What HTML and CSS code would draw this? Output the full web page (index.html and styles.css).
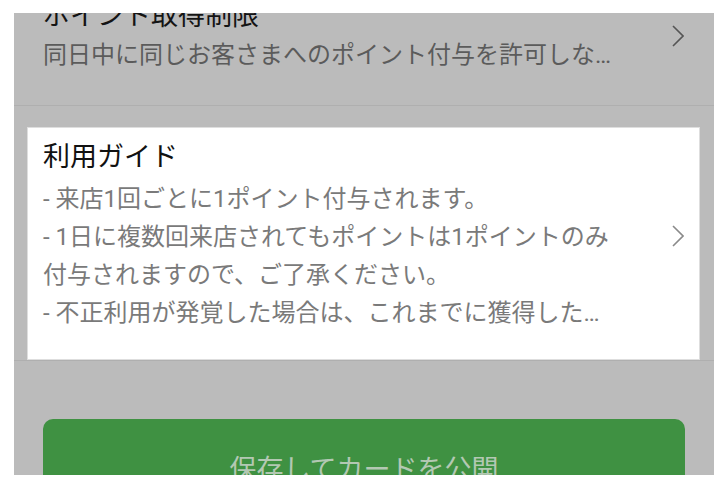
FILE: index.html
```html
<!DOCTYPE html>
<html lang="ja">
<head>
<meta charset="utf-8">
<link rel="stylesheet" href="styles.css">
</head>
<body>
<div class="screen">
  <div class="list">
    <div class="row row-dim">
      <div class="row-text">
        <div class="row-title">ポイント取得制限</div>
        <div class="row-sub">同日中に同じお客さまへのポイント付与を許可しな…</div>
      </div>
      <svg class="chev chev-dim" viewBox="0 0 12 22" width="12" height="22"><polyline points="1,1 11,11 1,21" fill="none" stroke="currentColor" stroke-width="1.6"/></svg>
    </div>
    <div class="row row-spot">
      <div class="card">
        <div class="row-text">
          <div class="card-title">利用ガイド</div>
          <div class="card-body">- 来店1回ごとに1ポイント付与されます。<br>- 1日に複数回来店されてもポイントは1ポイントのみ<br>付与されますので、ご了承ください。<br>- 不正利用が発覚した場合は、これまでに獲得した…</div>
        </div>
        <svg class="chev chev-card" viewBox="0 0 12 22" width="12" height="22"><polyline points="1,1 11,11 1,21" fill="none" stroke="currentColor" stroke-width="1.6"/></svg>
      </div>
    </div>
    <div class="actions">
      <div class="btn">保存してカードを公開</div>
    </div>
  </div>
</div>
</body>
</html>
```

FILE: styles.css
```css
html, body {
  margin: 0;
  padding: 0;
  background: #ffffff;
}
body {
  padding: 13px 14px 0 14px;
  font-family: Roboto, "Noto Sans CJK JP", sans-serif;
}
.screen {
  width: 700px;
  height: 462px;
  overflow: hidden;
  background: #bbbbbb;
}
.list {
  margin-top: -15px;
}
.row {
  display: flex;
  align-items: center;
  border-bottom: 1px solid #afafaf;
}
.row-dim {
  padding: 0 30px 32px 29px;
}
.row-text {
  flex: 1;
  min-width: 0;
}
.row-title {
  font-size: 27px;
  line-height: 36px;
  color: #141414;
  white-space: nowrap;
}
.row-sub {
  margin-top: 3px;
  font-size: 24px;
  line-height: 36px;
  color: #5b5b5b;
  white-space: nowrap;
}
.chev {
  flex: none;
  display: block;
}
.chev-dim {
  color: #555555;
}
.row-spot {
  padding: 21px 14px 0 13px;
}
.card {
  flex: 1;
  display: flex;
  align-items: center;
  background: #ffffff;
  border: 1px solid #dedede;
  padding: 11px 15px 27px 15px;
}
.card-title {
  font-size: 27px;
  line-height: 36px;
  color: #111111;
}
.card-body {
  margin-top: 5px;
  font-size: 24px;
  line-height: 38px;
  color: #7a7a7a;
  white-space: nowrap;
}
.chev-card {
  color: #8a8a8a;
}
.actions {
  padding: 58px 29px 0 29px;
}
.btn {
  height: 96px;
  border-radius: 10px;
  background: #3f9142;
  color: #b3c8b3;
  font-size: 27px;
  display: flex;
  align-items: center;
  justify-content: center;
}
```
